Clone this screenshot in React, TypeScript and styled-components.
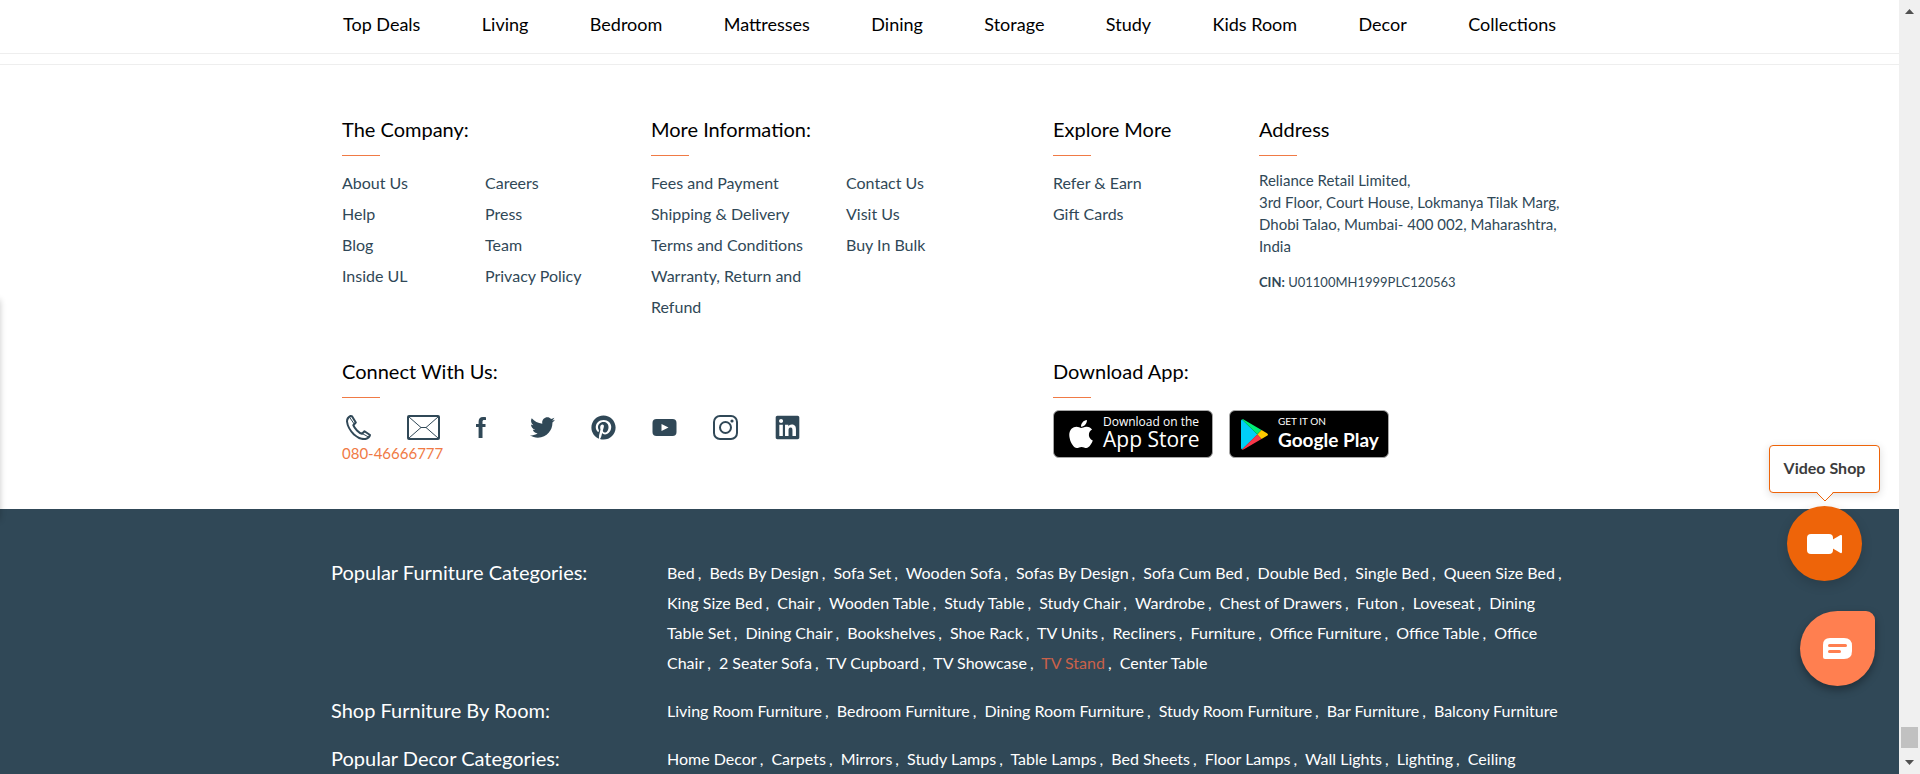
import React, { Fragment } from "react";
import styled, { createGlobalStyle } from "styled-components";
import { FaApple, FaLinkedin, FaPinterest, FaTwitter } from "react-icons/fa";

const slate = "#304857";
const orange = "#ee6409";
const coral = "#f07a45";

const GlobalStyle = createGlobalStyle`
  * { box-sizing: border-box; }
  body {
    margin: 0;
    background: #fff;
    color: #000;
    font-family: Lato, "Liberation Sans", sans-serif;
  }
  a { color: inherit; text-decoration: none; }
  ul, p, h2 { margin: 0; padding: 0; font-weight: 400; }
  ul { list-style: none; }
`;

const Shell = styled.div`
  display: flex;
  height: 100vh;
  overflow: hidden;
`;

const Page = styled.div`
  position: relative;
  flex: 1;
  min-width: 0;
  display: flex;
  flex-direction: column;
  overflow: hidden;
`;

const Header = styled.header`
  flex: none;
  border-bottom: 1px solid #eee;
`;

const Nav = styled.nav`
  display: flex;
  justify-content: space-between;
  max-width: 1213px;
  margin: 0 auto;
  padding: 12px 0 16px;
  font-size: 18px;
  line-height: 25px;
`;

const FooterTop = styled.footer`
  flex: none;
  margin-top: 10px;
  border-top: 1px solid #eee;
  padding: 52px 0 46px;
`;

const Columns = styled.div`
  display: grid;
  grid-template-columns: 309px 402px 206px 1fr;
  max-width: 1215px;
  margin: 0 auto;
  color: ${slate};

  & + & {
    margin-top: 37px;
    grid-template-columns: 711px 1fr;
  }
`;

const Title = styled.h2`
  color: #000;
  font-size: 20px;
  line-height: 24px;

  &::after {
    content: "";
    display: block;
    width: 38px;
    height: 1px;
    margin-top: 14px;
    background: ${coral};
  }
`;

const LinkColumns = styled.div<{ $first: number }>`
  display: grid;
  grid-template-columns: ${(p) => p.$first}px 1fr;
  margin-top: 11px;
  font-size: 16px;
  line-height: 31px;
`;

const Address = styled.address`
  margin-top: 13px;
  font-size: 15px;
  font-style: normal;
  line-height: 22px;
  white-space: nowrap;
`;

const Cin = styled.p`
  margin-top: 14px;
  font-size: 13px;
  line-height: 22px;
`;

const Socials = styled.ul`
  display: flex;
  align-items: center;
  gap: 36px;
  height: 32px;
  margin: 13px 0 0 4px;

  a, svg { display: block; }
`;

const FacebookItem = styled.li`
  width: 18px;
`;

const Phone = styled.a`
  display: block;
  color: ${coral};
  font-size: 15px;
  line-height: 20px;
`;

const Badges = styled.div`
  display: flex;
  gap: 16px;
  margin-top: 12px;
`;

const Badge = styled.a<{ $gap: number }>`
  display: flex;
  align-items: center;
  gap: ${(p) => p.$gap}px;
  width: 160px;
  height: 48px;
  padding-left: 11px;
  border: 1px solid #a6a6a6;
  border-radius: 6px;
  background: #000;
  color: #fff;

  svg { flex: none; }
`;

const BadgeText = styled.span<{ $apple?: boolean }>`
  display: flex;
  flex-direction: column;
  padding-bottom: 2px;
  font-family: ${(p) => (p.$apple ? '"Open Sans"' : "Lato")}, sans-serif;
  font-size: ${(p) => (p.$apple ? 21 : 19)}px;
  font-weight: ${(p) => (p.$apple ? 500 : 700)};
  line-height: 23px;
  white-space: nowrap;

  small {
    font-size: ${(p) => (p.$apple ? 12 : 10)}px;
    font-weight: 400;
    line-height: 13px;
  }
`;

const FooterLinks = styled.section`
  flex: 1 0 auto;
  padding-top: 49px;
  background: ${slate};
  color: #fff;
`;

const CategoryRow = styled.div`
  display: grid;
  grid-template-columns: 336px 1fr;
  max-width: 1237px;
  margin: 0 auto 18px;
`;

const CategoryTitle = styled.h2`
  font-size: 20px;
  line-height: 28px;
`;

const CategoryList = styled.p`
  font-size: 16px;
  line-height: 30px;
`;

const CategoryLink = styled.a<{ $active?: boolean }>`
  color: ${(p) => (p.$active ? "#c9614a" : "#fff")};
`;

const Comma = styled.span`
  margin: 0 4px 0 3px;
`;

const VideoShop = styled.button`
  position: absolute;
  right: 37px;
  bottom: 193px;
  width: 75px;
  height: 75px;
  padding: 0;
  border: 0;
  border-radius: 50%;
  background: ${orange};
  box-shadow: 0 4px 12px rgba(0, 0, 0, 0.16);

  svg { display: block; margin: 0 auto; }
`;

const Bubble = styled.div`
  position: absolute;
  right: 19px;
  bottom: 281px;
  width: 111px;
  padding: 10px 0 13px;
  border: 1px solid ${orange};
  border-radius: 4px;
  background: #fff;
  box-shadow: 0 2px 8px rgba(0, 0, 0, 0.14);
  color: #3c3c3c;
  font-size: 16px;
  font-weight: 700;
  line-height: 23px;
  text-align: center;

  svg {
    position: absolute;
    top: 100%;
    left: 46px;
  }
`;

const Chat = styled.button`
  position: absolute;
  right: 24px;
  bottom: 88px;
  width: 75px;
  height: 75px;
  padding: 0;
  border: 0;
  border-radius: 50% 9px 50% 50%;
  background: #ff7f50;
  box-shadow: 0 4px 8px rgba(0, 0, 0, 0.35);

  svg { display: block; margin: 0 auto; }
`;

const DrawerEdge = styled.div`
  position: absolute;
  top: 300px;
  left: -10px;
  width: 10px;
  height: 220px;
  box-shadow: 0 0 6px rgba(0, 0, 0, 0.22);
`;

const ScrollRail = styled.div`
  flex: none;
  display: flex;
  flex-direction: column;
  align-items: center;
  width: 21px;
  padding: 9px 0;
  background: #f0f0f0;
`;

const ScrollThumb = styled.div`
  width: 17px;
  height: 21px;
  margin: auto 0 12px;
  background: #c1c1c1;
`;

const navItems = [
  "Top Deals", "Living", "Bedroom", "Mattresses", "Dining",
  "Storage", "Study", "Kids Room", "Decor", "Collections",
];

const categories = [
  {
    title: "Popular Furniture Categories:",
    links: [
      "Bed", "Beds By Design", "Sofa Set", "Wooden Sofa", "Sofas By Design", "Sofa Cum Bed",
      "Double Bed", "Single Bed", "Queen Size Bed", "King Size Bed", "Chair", "Wooden Table",
      "Study Table", "Study Chair", "Wardrobe", "Chest of Drawers", "Futon", "Loveseat",
      "Dining Table Set", "Dining Chair", "Bookshelves", "Shoe Rack", "TV Units", "Recliners",
      "Furniture", "Office Furniture", "Office Table", "Office Chair", "2 Seater Sofa",
      "TV Cupboard", "TV Showcase", "TV Stand", "Center Table",
    ],
  },
  {
    title: "Shop Furniture By Room:",
    links: [
      "Living Room Furniture", "Bedroom Furniture", "Dining Room Furniture",
      "Study Room Furniture", "Bar Furniture", "Balcony Furniture",
    ],
  },
  {
    title: "Popular Decor Categories:",
    links: [
      "Home Decor", "Carpets", "Mirrors", "Study Lamps", "Table Lamps", "Bed Sheets",
      "Floor Lamps", "Wall Lights", "Lighting", "Ceiling",
    ],
  },
];

function Links({ items }: { items: string[] }) {
  return (
    <ul>
      {items.map((item) => (
        <li key={item}><a href="#">{item}</a></li>
      ))}
    </ul>
  );
}

const PhoneIcon = () => (
  <svg width="25" height="25" viewBox="0 0 25 25" fill="none" stroke={slate} strokeWidth="2" strokeLinejoin="round">
    <path d="M4.5 1C2.500 2 1 4 1 6.500C1.500 11 4 15.500 8 19.500C12 23 16 24.500 19.500 24C21.500 23.500 23.500 22 24 20L18.500 16.200L16 18.800C13 18 8.500 13.500 7.300 10.200L9.800 7.500L6 1.200Z" />
    <path d="M3.600 2.300L8.200 9M22.500 22L15.600 18.200" strokeWidth="1" />
  </svg>
);

const MailIcon = () => (
  <svg width="33" height="25" viewBox="0 0 33 25" fill="none" stroke={slate}>
    <rect x="1" y="1" width="31" height="23" rx="1" strokeWidth="2" />
    <path d="M2 2L14 12.500H19L31 2M2 23L14 12.500M31 23L19 12.500" strokeWidth="1" />
  </svg>
);

const FacebookIcon = () => (
  <svg width="10" height="21" viewBox="0 0 10 21">
    <path d="M10 0.200C9 0 8 0 7 0C4 0 2.600 1.800 2.600 4.500V7H0V10H2.600V21H6.500V10H9.500V7H6.500V4.800C6.500 3.500 7 3 8.200 3H10Z" fill={slate} />
  </svg>
);

const YoutubeIcon = () => (
  <svg width="25" height="25" viewBox="0 0 25 25">
    <rect x="0.500" y="4" width="24" height="17" rx="4" fill={slate} />
    <path d="M9.500 9V16L16.500 12.500Z" fill="#fff" />
  </svg>
);

const InstagramIcon = () => (
  <svg width="25" height="25" viewBox="0 0 25 25" fill="none" stroke={slate} strokeWidth="2">
    <rect x="1" y="1" width="23" height="23" rx="6" />
    <circle cx="12.500" cy="12.500" r="5.500" />
    <circle cx="19" cy="6" r="1.600" fill={slate} stroke="none" />
  </svg>
);

const PlayIcon = () => (
  <svg width="27" height="31" viewBox="0 0 27 31">
    <path d="M1 0.500L16.500 15.500L1 30.500C0.300 30 0 29.500 0 28.500V2C0 1.300 0.300 0.800 1 0.500Z" fill="#00cff8" />
    <path d="M1 0.500C1.500 0.200 2.200 0.200 3 0.700L20.500 10.900L16.200 15.300Z" fill="#00ee76" />
    <path d="M20.500 10.900L26 14.200C27.300 15 27.300 16 26 16.800L20.500 20L16.200 15.500Z" fill="#ffc900" />
    <path d="M16.200 15.500L20.500 20L3 30.300C2.200 30.800 1.500 30.800 1 30.500Z" fill="#f8374a" />
  </svg>
);

export default function App() {
  return (
    <Shell>
      <GlobalStyle />
      <Page>
        <Header>
          <Nav>
            {navItems.map((item) => (
              <a key={item} href="#">{item}</a>
            ))}
          </Nav>
        </Header>

        <FooterTop>
          <Columns>
            <div>
              <Title>The Company:</Title>
              <LinkColumns $first={143}>
                <Links items={["About Us", "Help", "Blog", "Inside UL"]} />
                <Links items={["Careers", "Press", "Team", "Privacy Policy"]} />
              </LinkColumns>
            </div>
            <div>
              <Title>More Information:</Title>
              <LinkColumns $first={195}>
                <Links
                  items={["Fees and Payment", "Shipping & Delivery", "Terms and Conditions", "Warranty, Return and Refund"]}
                />
                <Links items={["Contact Us", "Visit Us", "Buy In Bulk"]} />
              </LinkColumns>
            </div>
            <div>
              <Title>Explore More</Title>
              <LinkColumns $first={195}>
                <Links items={["Refer & Earn", "Gift Cards"]} />
              </LinkColumns>
            </div>
            <div>
              <Title>Address</Title>
              <Address>
                Reliance Retail Limited,<br />
                3rd Floor, Court House, Lokmanya Tilak Marg,<br />
                Dhobi Talao, Mumbai- 400 002, Maharashtra,<br />
                India
              </Address>
              <Cin><strong>CIN:</strong> U01100MH1999PLC120563</Cin>
            </div>
          </Columns>

          <Columns>
            <div>
              <Title>Connect With Us:</Title>
              <Socials>
                <li><a href="#" aria-label="Call us"><PhoneIcon /></a></li>
                <li><a href="#" aria-label="Email"><MailIcon /></a></li>
                <FacebookItem><a href="#" aria-label="Facebook"><FacebookIcon /></a></FacebookItem>
                <li><a href="#" aria-label="Twitter"><FaTwitter size={25} color={slate} /></a></li>
                <li><a href="#" aria-label="Pinterest"><FaPinterest size={25} color={slate} /></a></li>
                <li><a href="#" aria-label="YouTube"><YoutubeIcon /></a></li>
                <li><a href="#" aria-label="Instagram"><InstagramIcon /></a></li>
                <li><a href="#" aria-label="LinkedIn"><FaLinkedin size={27} color={slate} /></a></li>
              </Socials>
              <Phone href="tel:08046666777">080-46666777</Phone>
            </div>
            <div>
              <Title>Download App:</Title>
              <Badges>
                <Badge href="#" $gap={6}>
                  <FaApple size={32} />
                  <BadgeText $apple><small>Download on the</small>App Store</BadgeText>
                </Badge>
                <Badge href="#" $gap={10}>
                  <PlayIcon />
                  <BadgeText><small>GET IT ON</small>Google Play</BadgeText>
                </Badge>
              </Badges>
            </div>
          </Columns>
        </FooterTop>

        <FooterLinks>
          {categories.map(({ title, links }) => (
            <CategoryRow key={title}>
              <CategoryTitle>{title}</CategoryTitle>
              <CategoryList>
                {links.map((link, i) => (
                  <Fragment key={link}>
                    <CategoryLink href="#" $active={link === "TV Stand"}>{link}</CategoryLink>
                    {i < links.length - 1 && <Comma>,</Comma>}{" "}
                  </Fragment>
                ))}
              </CategoryList>
            </CategoryRow>
          ))}
        </FooterLinks>

        <DrawerEdge />
        <Bubble>
          Video Shop
          <svg width="18" height="10" viewBox="0 0 18 10">
            <path d="M0 -1L9 8.500L18 -1Z" fill="#fff" />
            <path d="M0 0L9 9L18 0" fill="none" stroke={orange} />
          </svg>
        </Bubble>
        <VideoShop type="button" aria-label="Video Shop">
          <svg width="35" height="20" viewBox="0 0 35 20" fill="#fff">
            <rect width="26" height="20" rx="4" />
            <path d="M25 6L33.500 1Q35 0.500 35 2V18Q35 19.500 33.500 19L25 14Z" />
          </svg>
        </VideoShop>
        <Chat type="button" aria-label="Chat">
          <svg width="29" height="21" viewBox="0 0 29 21">
            <path d="M7 0H21Q29 0 29 8V13Q29 21 21 21H2Q0 21 0 19V7Q0 0 7 0Z" fill="#fff" />
            <path d="M6.500 7.500H22.500M6.500 13.500H16.500" stroke="#ff7f50" strokeWidth="3" strokeLinecap="round" />
          </svg>
        </Chat>
      </Page>
      <ScrollRail aria-hidden="true">
        <svg width="9" height="5" viewBox="0 0 9 5"><path d="M4.500 0L9 5H0Z" fill="#505050" /></svg>
        <ScrollThumb />
        <svg width="9" height="5" viewBox="0 0 9 5"><path d="M0 0H9L4.500 5Z" fill="#505050" /></svg>
      </ScrollRail>
    </Shell>
  );
}
